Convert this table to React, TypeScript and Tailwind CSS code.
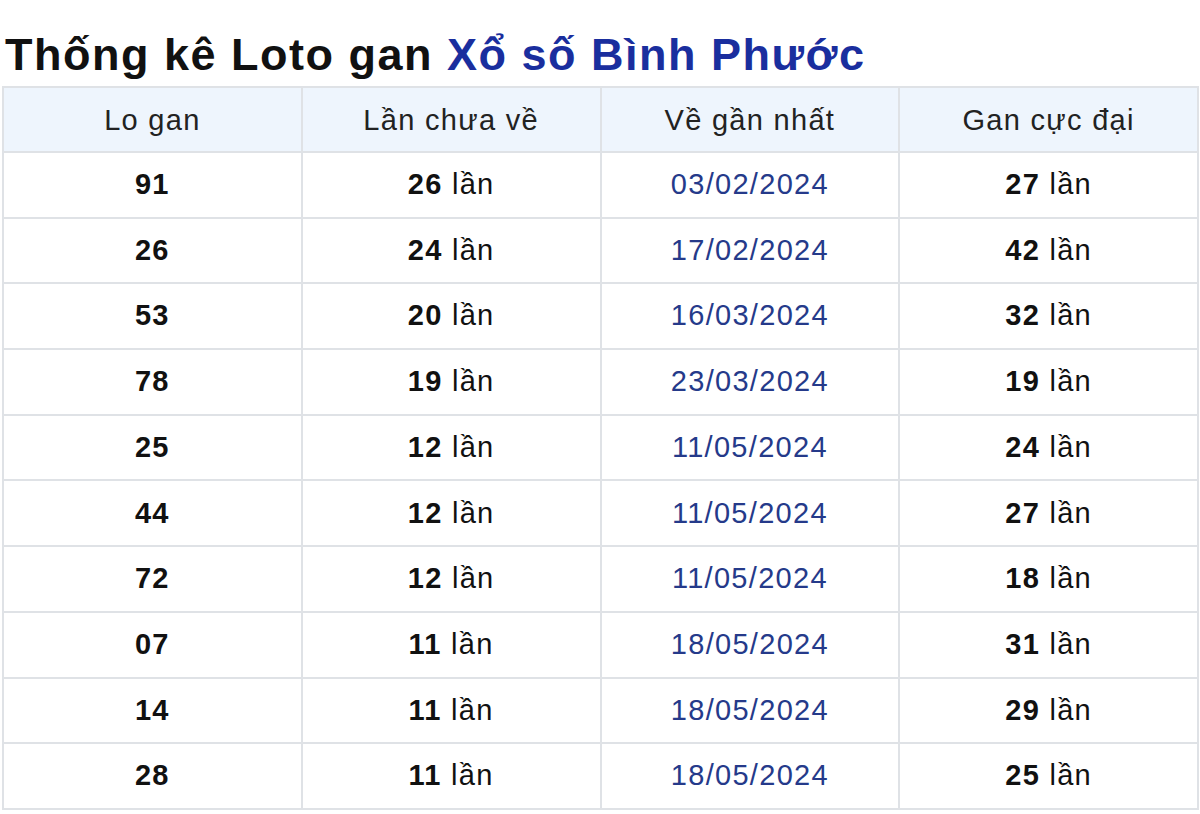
const rows = [
  ['91', '26', '03/02/2024', '27'],
  ['26', '24', '17/02/2024', '42'],
  ['53', '20', '16/03/2024', '32'],
  ['78', '19', '23/03/2024', '19'],
  ['25', '12', '11/05/2024', '24'],
  ['44', '12', '11/05/2024', '27'],
  ['72', '12', '11/05/2024', '18'],
  ['07', '11', '18/05/2024', '31'],
  ['14', '11', '18/05/2024', '29'],
  ['28', '11', '18/05/2024', '25'],
]

const headers = ['Lo gan', 'Lần chưa về', 'Về gần nhất', 'Gan cực đại']

export default function App() {
  return (
    <div className="bg-white px-[2px] pt-[26px] font-['Liberation_Sans',Arial,sans-serif] text-[#111]">
      <h2 className="ml-[3px] text-[45px] font-bold leading-[58px] tracking-[1.5px] text-[#111]">
        Thống kê Loto gan <span className="text-[#1a2e9e]">Xổ số Bình Phước</span>
      </h2>
      <table className="mt-[2px] w-[1197px] table-fixed border-collapse text-center text-[29px] tracking-[1.3px]">
        <thead>
          <tr className="h-[65px] bg-[#eef5fd]">
            {headers.map((h) => (
              <th key={h} className="border-2 border-[#dfe2e6] pt-[3px] font-normal text-[#222]">
                {h}
              </th>
            ))}
          </tr>
        </thead>
        <tbody>
          {rows.map((r, i) => (
            <tr key={i} className="h-[65.7px]">
              <td className="border-2 border-[#dfe2e6] font-bold">{r[0]}</td>
              <td className="border-2 border-[#dfe2e6]">
                <b>{r[1]}</b> lần
              </td>
              <td className="border-2 border-[#dfe2e6] text-[#253a8a]">{r[2]}</td>
              <td className="border-2 border-[#dfe2e6]">
                <b>{r[3]}</b> lần
              </td>
            </tr>
          ))}
        </tbody>
      </table>
    </div>
  )
}
